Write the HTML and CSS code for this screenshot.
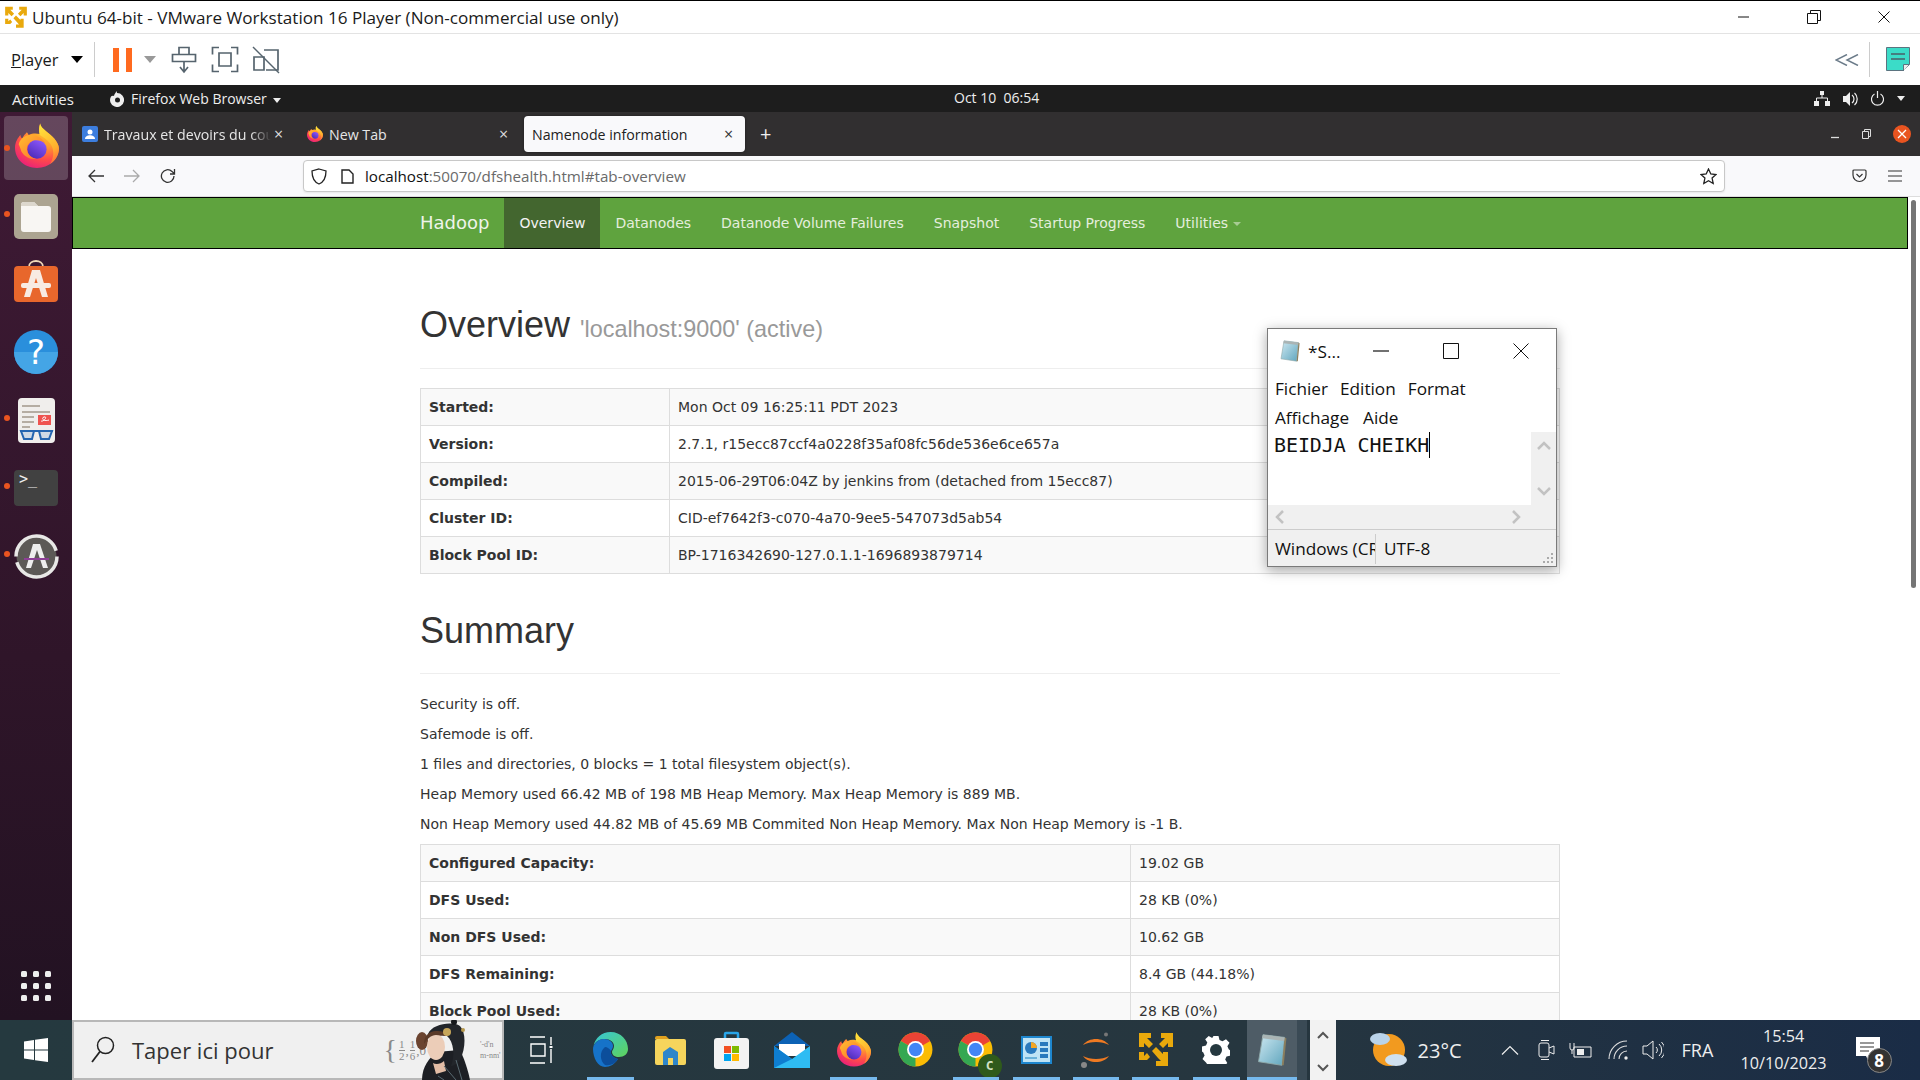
FILE: index.html
```html
<!DOCTYPE html>
<html lang="en">
<head>
<meta charset="utf-8">
<title>Ubuntu 64-bit - VMware Workstation 16 Player</title>
<link rel="stylesheet" href="styles.css">
</head>
<body>
<svg class="defs" width="0" height="0">
  <defs>
    <radialGradient id="ffbody" cx="0.72" cy="0.1" r="1.05">
      <stop offset="0" stop-color="#ffd028"/><stop offset="0.4" stop-color="#ff9a2e"/><stop offset="0.68" stop-color="#ff4a4a"/><stop offset="1" stop-color="#e31587"/>
    </radialGradient>
    <linearGradient id="ffflame" x1="0.4" y1="0" x2="0.7" y2="1"><stop offset="0" stop-color="#ffe03a"/><stop offset="0.65" stop-color="#ffae2e"/><stop offset="1" stop-color="#ff6a3a"/></linearGradient>
    <linearGradient id="ffball" x1="0.8" y1="0" x2="0.2" y2="1"><stop offset="0" stop-color="#9059ff"/><stop offset="1" stop-color="#4a2ab5"/></linearGradient>
    <linearGradient id="ffswoosh" x1="0" y1="0" x2="1" y2="1"><stop offset="0" stop-color="#ffc02e"/><stop offset="1" stop-color="#ff6a2e"/></linearGradient>
    <linearGradient id="notegrad" x1="0" y1="0" x2="1" y2="1"><stop offset="0" stop-color="#cfe9f2"/><stop offset="1" stop-color="#5fa5bd"/></linearGradient>
    <linearGradient id="edgegrad" x1="0" y1="0" x2="1" y2="1"><stop offset="0" stop-color="#36c5d8"/><stop offset="1" stop-color="#5fd35a"/></linearGradient>
    <symbol id="ff" viewBox="0 0 48 48">
      <path d="M27.500 0C29 6 37 9 43 16c4 5 5 9 5 11 -1 12-11 21-24 21C10 48 0 38 0 26c0-6 3-11 6-14 0 2 1 3 2 4 1-3 3-5 5-7 1 1 1 2 2 3 4-2 8-2 12-1-1-4-1-8 .5-12z" fill="url(#ffbody)"/>
      <path d="M27.500 0C29 6 37 9 43 16c4 5 5 9 5 11 0 7-4 13-10 17 4-6 5-14 2-20-3-6-10-10-13-12-1-4-1-8 .5-12z" fill="url(#ffflame)"/>
      <circle cx="24" cy="27.500" r="10.500" fill="url(#ffball)"/>
      <path d="M4 22c2-7 9-11 16-10 6 1 11 5 13 9-4-3-9-4-13-3-5 2-7 5-7 9 0 5 4 10 10 11-7 1-13-3-16-8-1-3-2-6-3-8z" fill="url(#ffswoosh)"/>
    </symbol>
    <symbol id="chrome" viewBox="0 0 48 48">
      <circle cx="24" cy="24" r="22" fill="#fbbc04"/>
      <path d="M24 24L4.900 13A22 22 0 0 1 43.100 13z" fill="#ea4335"/>
      <path d="M24 24L24 46A22 22 0 0 1 4.900 13z" fill="#34a853"/>
      <circle cx="24" cy="24" r="11" fill="#fff"/><circle cx="24" cy="24" r="8.600" fill="#4285f4"/>
    </symbol>
    <symbol id="vmlogo" viewBox="0 0 36 36">
      <path d="M1 1h12v5H9l6 6-4 4-5-5v4H1zM35 1H23v5h4l-6 6 4 4 5-5v4h5zM14 19l4-4 7 7v-2h5v14H18v-5h5l-1-1-2-2-6-7z" fill="#e9a90c"/>
      <path d="M1 20h5v4l3-3 3 4-3 3H1z" fill="#e9a90c"/>
    </symbol>
    <symbol id="notepad" viewBox="0 0 40 40">
      <path d="M10 3l24 3-3 31-26-4z" fill="url(#notegrad)" stroke="#8fa8a8"/>
      <path d="M31 37l3-31 2 1-3 30z" fill="#8b7f5e"/>
      <path d="M10 3l24 3-.5 4L9 7z" fill="#aab4b4"/>
    </symbol>
  </defs>
</svg>

<div class="desktop">
  <header class="titlebar">
    <svg class="tb-logo" width="24" height="23"><use href="#vmlogo"/></svg>
    <span class="tb-title">Ubuntu 64-bit - VMware Workstation 16 Player (Non-commercial use only)</span>
    <div class="wc">
      <svg width="12" height="12" viewBox="0 0 12 12"><path d="M0 6h11" stroke="#111" fill="none"/></svg>
      <svg width="14" height="14" viewBox="0 0 14 14"><path d="M.5 3.500h10v10H.5zM3.500 3V.5h10v10H11" stroke="#111" fill="none"/></svg>
      <svg width="12" height="12" viewBox="0 0 12 12"><path d="M.5.5l11 11M11.500.5l-11 11" stroke="#111" fill="none"/></svg>
    </div>
  </header>

  <div class="toolbar">
    <span class="tl-player"><u>P</u>layer</span>
    <span class="caret-b"></span>
    <span class="tl-sep"></span>
    <span class="pause"><i></i><i></i></span>
    <span class="caret-g"></span>
    <svg class="t-ic" width="26" height="28" viewBox="0 0 26 28"><path d="M8 1.500h10v7H8zM1.500 8.500h23v7H1.500zM13 15v10M9 21l4 5 4-5" fill="none" stroke="#56646e" stroke-width="1.700"/></svg>
    <svg class="t-ic" width="28" height="27" viewBox="0 0 28 27"><path d="M8 1.500H1.500v7M20 1.500h6.500v7M8 25.500H1.500v-7M20 25.500h6.500v-7" fill="none" stroke="#56646e" stroke-width="1.700"/><path d="M8 7h12v13H8z" fill="none" stroke="#56646e" stroke-width="1.700"/></svg>
    <svg class="t-ic" width="28" height="28" viewBox="0 0 28 28"><path d="M12 4h14v20H14M2 11h10v13H2z" fill="none" stroke="#56646e" stroke-width="1.700"/><path d="M1 1l26 26" stroke="#56646e" stroke-width="1.500"/></svg>
    <span class="grow"></span>
    <svg width="24" height="12" viewBox="0 0 24 12"><path d="M12 .5L1 6l11 5.500M23 .5L12 6l11 5.500" fill="none" stroke="#6c7c8a" stroke-width="1.500"/></svg>
    <span class="tl-sep tl-sep2"></span>
    <svg width="24" height="25" viewBox="0 0 24 25"><path d="M.5.5h23v17l-6 6H.5z" fill="#3bdcc8" stroke="#5b7480"/><path d="M17.500 24v-6.500H23" fill="#eee" stroke="#5b7480"/><path d="M5 7h14M5 12h14" stroke="#4a5f68" stroke-width="1.500"/></svg>
  </div>

  <div class="guest">
    <div class="gbar">
      <span class="g-act">Activities</span>
      <span class="g-app">
        <svg width="14" height="16" viewBox="0 0 14 16"><path d="M7 2a7 7 0 1 1-6 3.500C2 4.500 3 4.500 4 5c0-2 2-3 2.500-5 .3 1 .5 1.500.5 2z" fill="#eee"/><circle cx="7.500" cy="9" r="2.500" fill="#1d1d1d"/></svg>
        <span>Firefox Web Browser<span class="caret-w"></span></span>
      </span>
      <span class="g-clock">Oct 10&nbsp;&nbsp;06:54</span>
      <span class="g-tray">
        <svg width="16" height="15" viewBox="0 0 16 15"><path d="M6 0h4v4H6zM0 10h5v5H0zM11 10h5v5h-5z" fill="#eee"/><path d="M8 4v3M2.500 10V7h11v3" fill="none" stroke="#eee"/></svg>
        <svg width="15" height="14" viewBox="0 0 15 14"><path d="M0 4h3l4-4v14l-4-4H0z" fill="#eee"/><path d="M9 3a5 5 0 0 1 0 8M11.500 1a8 8 0 0 1 0 12" fill="none" stroke="#eee" stroke-width="1.200"/></svg>
        <svg width="13" height="15" viewBox="0 0 13 15"><path d="M6.500 0v7M3.500 3a6 6 0 1 0 6 0" fill="none" stroke="#eee" stroke-width="1.200"/></svg>
        <span class="caret-w caret-tray"></span>
      </span>
    </div>

    <div class="guest-main">
      <nav class="dock">
        <div class="dock-item active"><i class="run"></i><svg class="ff-dock" width="44" height="46"><use href="#ff"/></svg></div>
        <div class="dock-item"><i class="run"></i>
          <svg width="44" height="45" viewBox="0 0 44 45"><rect width="44" height="45" rx="5" fill="#aca491"/><path d="M7 11a3 3 0 0 1 3-3h10l4 4h10a3 3 0 0 1 3 3v20a3 3 0 0 1-3 3H10a3 3 0 0 1-3-3z" fill="#f8f6f3"/><path d="M7 11a3 3 0 0 1 3-3h10l4 4H7z" fill="#dcd7cd"/></svg>
        </div>
        <div class="dock-item">
          <svg class="store" width="44" height="42" viewBox="0 0 44 42"><path d="M15 7c0-8 14-8 14 0" fill="none" stroke="#f1d9b8" stroke-width="1.800"/><rect y="6" width="44" height="36" rx="4" fill="#e8672c"/><path d="M18 10h8l8 27h-6l-6-19-6 19h-6z" fill="#f8ebe2"/><rect x="7" y="23" width="30" height="5" rx="2" fill="#f8ebe2"/></svg>
        </div>
        <div class="dock-item">
          <svg width="44" height="44" viewBox="0 0 44 44"><circle cx="22" cy="22" r="22" fill="#2a8fdc"/><path d="M0 22h44a22 22 0 0 1-44 0z" fill="#44a5e6"/><text x="22" y="34" class="help-q">?</text></svg>
        </div>
        <div class="dock-item"><i class="run"></i>
          <svg width="37" height="45" viewBox="0 0 37 45"><rect width="37" height="45" rx="4" fill="#f0eeec"/><path d="M4 8h18M4 14h28M4 19h12M4 24h12M4 29h8" stroke="#b5ada3" stroke-width="1.800"/><rect x="20" y="17" width="13" height="10" fill="#ef5350"/><path d="M23 23c3 1 7-5 3-4-3 1-1 5 5 3" stroke="#fff" fill="none"/><path d="M2 33h33" stroke="#2565b0" stroke-width="2"/><path d="M3 33h13l-2 8H6zM21 33h13l-3 8h-8z" fill="#cfd9e5" stroke="#2565b0" stroke-width="2"/></svg>
        </div>
        <div class="dock-item"><i class="run"></i>
          <div class="term"><span>&gt;_</span></div>
        </div>
        <div class="dock-item"><i class="run"></i>
          <svg width="45" height="45" viewBox="0 0 45 45"><circle cx="22.500" cy="22.500" r="20" fill="#5c5956"/><circle cx="22.500" cy="22.500" r="20.500" fill="none" stroke="#e8e8e6" stroke-width="3.500" stroke-dasharray="58 6"/><path d="M19 10h7l8 24h-5l-6-18-6 18h-5z" fill="#eee"/><path d="M10 25h25" stroke="#8d3f96" stroke-width="2"/></svg>
        </div>
        <span class="grow"></span>
        <div class="apps"><i></i><i></i><i></i><i></i><i></i><i></i><i></i><i></i><i></i></div>
      </nav>

      <div class="firefox">
        <div class="ff-tabs">
          <div class="tab t1">
            <svg width="16" height="16" viewBox="0 0 16 16"><rect width="16" height="16" rx="2" fill="#3c7ddd"/><circle cx="8" cy="6" r="2.500" fill="#fff"/><path d="M3 13c0-5 10-5 10 0z" fill="#fff"/></svg>
            <span class="tab-t fade">Travaux et devoirs du cours</span>
            <span class="tab-x">×</span>
          </div>
          <div class="tab t2">
            <svg width="16" height="18"><use href="#ff"/></svg>
            <span class="tab-t">New Tab</span>
            <span class="tab-x">×</span>
          </div>
          <div class="tab t3">
            <span class="tab-t">Namenode information</span>
            <span class="tab-x">×</span>
          </div>
          <span class="tab-plus">+</span>
          <span class="grow"></span>
          <span class="ff-wc">
            <svg width="9" height="9" viewBox="0 0 9 9"><path d="M0 7.500h8" stroke="#ddd" stroke-width="1.300"/></svg>
            <svg width="9" height="10" viewBox="0 0 9 10"><path d="M.5 2.500h6v7h-6zM2.500 2V.5h6v7H7" fill="none" stroke="#ddd"/></svg>
            <span class="ff-close"><svg width="10" height="10" viewBox="0 0 10 10"><path d="M1 1l8 8M9 1l-8 8" stroke="#fff" stroke-width="1.300"/></svg></span>
          </span>
        </div>
        <div class="ff-nav">
          <svg class="ni" width="16" height="14" viewBox="0 0 16 14"><path d="M7 1L1 7l6 6M1 7h15" fill="none" stroke="#333" stroke-width="1.300"/></svg>
          <svg class="ni ni2" width="16" height="14" viewBox="0 0 16 14"><path d="M9 1l6 6-6 6M15 7H0" fill="none" stroke="#aaa" stroke-width="1.300"/></svg>
          <svg class="ni ni3" width="16" height="16" viewBox="0 0 16 16"><path d="M14 8a6.300 6.300 0 1 1-2-4.600L14.500 6M14.500 1v5H10" fill="none" stroke="#333" stroke-width="1.300"/></svg>
          <div class="urlbar">
            <svg width="16" height="17" viewBox="0 0 16 17"><path d="M8 1l7 2c0 7-2 11-7 13C3 14 1 10 1 3z" fill="none" stroke="#222" stroke-width="1.300"/></svg>
            <svg class="pg" width="13" height="15" viewBox="0 0 13 15"><path d="M1 1h7l4 4v9H1z" fill="none" stroke="#222" stroke-width="1.400"/></svg>
            <span class="url"><b>localhost</b>:50070/dfshealth.html#tab-overview</span>
            <span class="grow"></span>
            <svg class="star" width="17" height="17" viewBox="0 0 17 17"><path d="M8.500 1l2.300 5 5.200.6-3.900 3.500 1.100 5.400-4.700-2.700-4.700 2.700 1.100-5.400L1 6.600 6.200 6z" fill="none" stroke="#222" stroke-width="1.300"/></svg>
          </div>
          <svg class="pocket" width="15" height="14" viewBox="0 0 15 14"><path d="M2 1h11a1 1 0 0 1 1 1v4a6.500 6.500 0 0 1-13 0V2a1 1 0 0 1 1-1z" fill="none" stroke="#333" stroke-width="1.200"/><path d="M4.500 5l3 3 3-3" fill="none" stroke="#333" stroke-width="1.200"/></svg>
          <svg class="burger" width="14" height="12" viewBox="0 0 14 12"><path d="M0 1h14M0 6h14M0 11h14" stroke="#333" stroke-width="1.200"/></svg>
        </div>

        <div class="viewport">
          <div class="navbar">
            <div class="nav-in">
              <a class="brand">Hadoop</a>
              <a class="nav-a on">Overview</a>
              <a class="nav-a">Datanodes</a>
              <a class="nav-a">Datanode Volume Failures</a>
              <a class="nav-a">Snapshot</a>
              <a class="nav-a">Startup Progress</a>
              <a class="nav-a">Utilities<i class="nav-caret"></i></a>
            </div>
          </div>
          <main class="page">
            <div class="page-header"><h1>Overview <small>'localhost:9000' (active)</small></h1></div>
            <table class="tbl t-a">
              <tr><th>Started:</th><td>Mon Oct 09 16:25:11 PDT 2023</td></tr>
              <tr><th>Version:</th><td>2.7.1, r15ecc87ccf4a0228f35af08fc56de536e6ce657a</td></tr>
              <tr><th>Compiled:</th><td>2015-06-29T06:04Z by jenkins from (detached from 15ecc87)</td></tr>
              <tr><th>Cluster ID:</th><td>CID-ef7642f3-c070-4a70-9ee5-547073d5ab54</td></tr>
              <tr><th>Block Pool ID:</th><td>BP-1716342690-127.0.1.1-1696893879714</td></tr>
            </table>
            <div class="page-header"><h1>Summary</h1></div>
            <p>Security is off.</p>
            <p>Safemode is off.</p>
            <p>1 files and directories, 0 blocks = 1 total filesystem object(s).</p>
            <p>Heap Memory used 66.42 MB of 198 MB Heap Memory. Max Heap Memory is 889 MB.</p>
            <p>Non Heap Memory used 44.82 MB of 45.69 MB Commited Non Heap Memory. Max Non Heap Memory is -1 B.</p>
            <table class="tbl t-b">
              <tr><th>Configured Capacity:</th><td>19.02 GB</td></tr>
              <tr><th>DFS Used:</th><td>28 KB (0%)</td></tr>
              <tr><th>Non DFS Used:</th><td>10.62 GB</td></tr>
              <tr><th>DFS Remaining:</th><td>8.4 GB (44.18%)</td></tr>
              <tr><th>Block Pool Used:</th><td>28 KB (0%)</td></tr>
            </table>
          </main>
          <span class="scrollthumb"></span>
        </div>
      </div>
    </div>
  </div>

  <footer class="taskbar">
    <div class="start"><svg width="24" height="24" viewBox="0 0 24 24"><path d="M0 3.500l10-1.500v9.500H0zM11 1.800L24 0v11.500H11zM0 12.500h10V22L0 20.500zM11 12.500h13V24l-13-1.800z" fill="#fff"/></svg></div>
    <div class="search">
      <svg width="24" height="28" viewBox="0 0 24 28"><circle cx="14.500" cy="9.500" r="8" fill="none" stroke="#222" stroke-width="1.500"/><path d="M9 15.500L1 26" stroke="#222" stroke-width="1.800"/></svg>
      <span class="s-text">Taper ici pour</span>
      <span class="grow"></span>
      <span class="s-math"><span class="s-brace">{</span><span class="frac"><span>1</span><span>2</span></span>,<span class="frac"><span>1</span><span>6</span></span>,0</span>
      <svg class="ada" width="66" height="60" viewBox="0 0 66 60">
        <path d="M8 60c0-14 8-22 14-28l24-2c4 8 8 20 10 30z" fill="#1d1f24"/>
        <path d="M14 14c4-10 24-13 32-8 6 6 6 22 0 34-3 4-7 6-9 6 4-10 3-24-4-30-6-2-10 0-11 4z" fill="#23262b"/>
        <ellipse cx="8" cy="21" rx="6" ry="9" fill="#6b4430"/>
        <ellipse cx="22" cy="27" rx="9" ry="13" fill="#eccdb8"/>
        <path d="M22 11c-7 0-12 5-12 13 3-5 7-9 12-9 5 0 10 2 12 0-2-3-6-4-12-4z" fill="#5b3a28"/>
        <path d="M19 43c3 2 8 1 11-2l2 10-10 3z" fill="#e3bda6"/>
        <circle cx="33" cy="12" r="4" fill="#c7a65a"/><circle cx="49" cy="10" r="2" fill="#b6984c"/><circle cx="40" cy="2" r="3" fill="#17191d"/>
        <path d="M30 46l12 14M42 40l6 20M24 56l6 4" stroke="#596a72" stroke-width="1"/>
      </svg>
      <span class="s-form">'-d'n<br>m-nm'</span>
    </div>
    <div class="taskview"><svg width="24" height="28" viewBox="0 0 24 28"><path d="M0 1h15M0 27h15M1 8h14v12H1zM21 1v8M21 13v14" fill="none" stroke="#fff" stroke-width="1.400"/><rect x="19.500" y="10" width="3" height="2" fill="#fff"/></svg></div>
    <div class="apps-tb">
      <div class="tb-i on">
        <svg width="37" height="37" viewBox="0 0 37 37"><path d="M18.500 1C29 1 36 9 36 18c0 5-4 8-9 8-4 0-7-2-7-5 0-2 2-3 2-6 0-4-4-7-9-7C7 8 3 11 1.500 15 3 7 10 1 18.500 1z" fill="url(#edgegrad)"/><path d="M1 18c0-5 5-10 11-10 5 0 9 3 9 7 0 2-1 3-2 5-1 3 2 7 7 8-3 5-8 8-13 8C6 36 1 27 1 18z" fill="#1673c9"/><path d="M13 16c2 0 5 2 6 4-1 3 2 7 7 8-3 5-8 7-13 6-5-4-6-13 0-18z" fill="#0c4e9b"/></svg>
      </div>
      <div class="tb-i">
        <svg width="33" height="32" viewBox="0 0 33 32"><path d="M1 4a2 2 0 0 1 2-2h9l3 3H1z" fill="#e0a11f"/><rect x="1" y="5" width="31" height="26" rx="2" fill="#f6d55c"/><path d="M9 18l7-5 8 5v13h-5v-7h-5v7H9z" fill="#2f86c9"/></svg>
      </div>
      <div class="tb-i">
        <svg width="35" height="38" viewBox="0 0 35 38"><path d="M11 8V3a1 1 0 0 1 1-1h11a1 1 0 0 1 1 1v5" fill="none" stroke="#2aa5e8" stroke-width="2.500"/><rect y="7" width="35" height="31" rx="3" fill="#f3f3f3"/><rect x="10" y="15" width="7" height="7" fill="#f25022"/><rect x="18" y="15" width="7" height="7" fill="#7fba00"/><rect x="10" y="23" width="7" height="7" fill="#00a4ef"/><rect x="18" y="23" width="7" height="7" fill="#ffb900"/></svg>
      </div>
      <div class="tb-i">
        <svg width="36" height="36" viewBox="0 0 36 36"><path d="M18 0L0 14h36z" fill="#0c62b5"/><path d="M5 12h26v12H5z" fill="#fff"/><path d="M0 14l18 13 18-13v22H0z" fill="#2fbcf3"/><path d="M0 14l18 13L0 36z" fill="#0e7ed1"/></svg>
      </div>
      <div class="tb-i on"><svg width="34" height="37"><use href="#ff"/></svg></div>
      <div class="tb-i"><svg width="37" height="37"><use href="#chrome"/></svg></div>
      <div class="tb-i on chromec">
        <svg width="37" height="37"><use href="#chrome"/></svg>
        <span class="c-badge">C</span>
      </div>
      <div class="tb-i on">
        <svg width="31" height="28" viewBox="0 0 31 28"><rect width="31" height="28" fill="#1e87cf"/><rect x="2" y="2" width="27" height="24" fill="#bfe3f5"/><circle cx="10" cy="12" r="6" fill="#2a79bd"/><path d="M10 12V6a6 6 0 0 1 6 6z" fill="#f5a623"/><path d="M19 6h8v4h-8zM19 12h8v4h-8zM19 18h8v4h-8z" fill="#2a79bd"/><path d="M4 22h12" stroke="#6bb2da" stroke-width="2"/></svg>
      </div>
      <div class="tb-i on">
        <svg width="32" height="36" viewBox="0 0 32 36"><path d="M3 13c6-8 20-8 26 0-7-4-19-4-26 0zM3 24c6 8 20 8 26 0-7 4-19 4-26 0z" fill="#ef7a22"/><circle cx="26" cy="2.500" r="2" fill="#777"/><circle cx="4" cy="33" r="3" fill="#888"/></svg>
      </div>
      <div class="tb-i on"><svg width="36" height="38"><use href="#vmlogo"/></svg></div>
      <div class="tb-i on">
        <svg width="28" height="28" viewBox="0 0 28 28"><path d="M11.500 0h5l1 4 3 1.300 3.500-2.100 3.500 3.500-2.100 3.500 1.300 3 1.800 1.300v5l-4 1-1.300 3 2.100 3.500-3.500 3.500-3.500-2.100-3 1.300-1 4h-5l-1-4-3-1.300L4 26.400.5 23l2.100-3.500-1.300-3-1.300-1v-5l4-1 1.300-3L3.200 3.200 6.700 0l3.500 2.100 1.300-2.100z" fill="#fff"/><circle cx="14" cy="14" r="6" fill="#25383f"/></svg>
      </div>
      <div class="tb-i on current"><svg width="36" height="38"><use href="#notepad"/></svg></div>
    </div>
    <div class="tb-edge"></div>
    <div class="tb-scroll">
      <svg width="12" height="8" viewBox="0 0 12 8"><path d="M1 7l5-5 5 5" fill="none" stroke="#555" stroke-width="2"/></svg>
      <svg width="12" height="8" viewBox="0 0 12 8"><path d="M1 1l5 5 5-5" fill="none" stroke="#555" stroke-width="2"/></svg>
    </div>
    <div class="tray">
      <svg class="weather" width="38" height="40" viewBox="0 0 38 40"><circle cx="19" cy="20" r="16" fill="#f29a1f"/><ellipse cx="10" cy="9" rx="10" ry="6" fill="#b9d3ea"/><ellipse cx="26" cy="30" rx="11" ry="6" fill="#cfe0ef"/></svg>
      <span class="temp">23°C</span>
      <svg class="tr chev" width="18" height="10" viewBox="0 0 18 10"><path d="M1 9.500l8-8 8 8" fill="none" stroke="#eee" stroke-width="1.200"/></svg>
      <svg class="tr tr-v" width="17" height="22" viewBox="0 0 17 22"><rect x="1" y="4" width="10" height="14" rx="2" fill="none" stroke="#eee"/><path d="M11 9l5-2v8l-5-2M3 1.500h8M3 20.500h8" fill="none" stroke="#eee"/></svg>
      <svg class="tr tr-b" width="23" height="16" viewBox="0 0 23 16"><path d="M5 5h17v10H5zM1 1v5a2 2 0 0 0 4 0V1M3 8v4" fill="none" stroke="#eee"/><rect x="8" y="7" width="7" height="6" fill="#eee"/></svg>
      <svg class="tr tr-w" width="22" height="20" viewBox="0 0 22 20"><path d="M1 19A18 18 0 0 1 19 1M6 19A13 13 0 0 1 19 6M11 19a8 8 0 0 1 8-8" fill="none" stroke="#ddd" stroke-width="1.100"/><circle cx="18" cy="18" r="1.700" fill="#eee"/></svg>
      <svg class="tr tr-s" width="22" height="20" viewBox="0 0 22 20"><path d="M1 6h4l6-5v18l-6-5H1zM14 7a4 4 0 0 1 0 6M17 4a8 8 0 0 1 0 12M19.500 2a11 11 0 0 1 0 16" fill="none" stroke="#eee"/></svg>
      <span class="lang">FRA</span>
      <span class="clock"><span>15:54</span><span>10/10/2023</span></span>
      <span class="notif">
        <svg width="24" height="26" viewBox="0 0 24 26"><path d="M0 0h24v19h-6l-5 6-3-6H0z" fill="#fff"/><path d="M4 6h14M4 10h14M4 14h9" stroke="#333" stroke-width="1.200"/></svg>
        <span class="nbadge">8</span>
      </span>
    </div>
  </footer>

  <section class="notepad">
    <div class="np-title">
      <svg width="24" height="24"><use href="#notepad"/></svg>
      <span class="np-name">*S...</span>
      <span class="grow"></span>
      <svg class="np-min" width="16" height="2" viewBox="0 0 16 2"><path d="M0 1h16" stroke="#111" stroke-width="1.200"/></svg>
      <svg class="np-max" width="16" height="16" viewBox="0 0 16 16"><path d="M.5.5h15v15H.5z" fill="none" stroke="#111"/></svg>
      <svg class="np-cls" width="16" height="16" viewBox="0 0 16 16"><path d="M.5.5l15 15M15.500.5l-15 15" stroke="#111"/></svg>
    </div>
    <div class="np-menu"><span>Fichier</span><span>Edition</span><span>Format</span><span>Affichage</span><span>Aide</span></div>
    <div class="np-edit">
      <div class="np-text">BEIDJA CHEIKH<i class="np-cur"></i></div>
      <div class="np-vs">
        <svg width="14" height="9" viewBox="0 0 14 9"><path d="M1 8l6-6 6 6" fill="none" stroke="#c2c2c2" stroke-width="2.500"/></svg>
        <svg width="14" height="9" viewBox="0 0 14 9"><path d="M1 1l6 6 6-6" fill="none" stroke="#c2c2c2" stroke-width="2.500"/></svg>
      </div>
    </div>
    <div class="np-hs">
      <svg width="9" height="14" viewBox="0 0 9 14"><path d="M8 1L2 7l6 6" fill="none" stroke="#c2c2c2" stroke-width="2.500"/></svg>
      <svg width="9" height="14" viewBox="0 0 9 14"><path d="M1 1l6 6-6 6" fill="none" stroke="#c2c2c2" stroke-width="2.500"/></svg>
    </div>
    <div class="np-status">
      <span class="np-enc">Windows (CRLF)</span>
      <span class="np-utf">UTF-8</span>
      <svg class="np-grip" width="12" height="12" viewBox="0 0 12 12"><path d="M9 1h2v2H9zM5 5h2v2H5zM9 5h2v2H9zM1 9h2v2H1zM5 9h2v2H5zM9 9h2v2H9z" fill="#aaa"/></svg>
    </div>
  </section>
</div>
</body>
</html>
```
FILE: styles.css
```css
* { box-sizing: border-box; }
html, body { margin: 0; padding: 0; width: 1920px; height: 1080px; overflow: hidden; background: #fff; }
body { font-family: "Open Sans", sans-serif; color: #111; }
.defs { position: absolute; }
.grow { flex: 1 1 auto; }
svg { display: block; flex: none; }

.desktop { position: relative; width: 1920px; height: 1080px; display: flex; flex-direction: column; }

/* VMware title bar */
.titlebar { height: 34px; border-top: 1px solid #000; border-bottom: 1px solid #e3e3e3; display: flex; align-items: center; padding-left: 4px; background: #fff; }
.tb-logo { margin-right: 4px; }
.tb-title { font-size: 17.1px; color: #1a1a1a; white-space: nowrap; }
.wc { margin-left: auto; display: flex; align-items: center; gap: 57px; padding-right: 30px; }

/* VMware toolbar */
.toolbar { height: 51px; display: flex; align-items: center; padding: 0 10px 0 11px; background: #fff; }
.tl-player { font-size: 16.5px; color: #1a1a1a; }
.caret-b { width: 0; height: 0; border: 6px solid transparent; border-top: 7px solid #000; border-bottom: 0; margin-left: 12px; }
.tl-sep { width: 1px; height: 35px; background: #ccc; margin-left: 11px; }
.tl-sep2 { margin: 0 16px 0 10px; }
.pause { display: flex; gap: 7px; margin-left: 18px; }
.pause i { width: 6px; height: 24px; background: #ff6a1f; }
.caret-g { width: 0; height: 0; border: 6px solid transparent; border-top: 7px solid #999; border-bottom: 0; margin: 0 15px 0 12px; }
.t-ic { margin-right: 14px; }
.t-ic:nth-of-type(2) { margin-right: 13px; }

/* guest */
.guest { flex: 1 1 0; min-height: 0; display: flex; flex-direction: column; }
.gbar { height: 27px; background: #1d1d1d; color: #eee; display: flex; align-items: center; font-size: 14px; padding-left: 12px; position: relative; }
.g-act { width: 98px; font-size: 15px; }
.g-app { display: flex; align-items: center; gap: 7px; }
.caret-w { display: inline-block; width: 0; height: 0; border: 4.500px solid transparent; border-top: 5px solid #eee; border-bottom: 0; margin-left: 6px; vertical-align: middle; }
.g-clock { position: absolute; left: 954px; top: 3px; white-space: nowrap; }
.g-tray { margin-left: auto; display: flex; align-items: center; gap: 13px; padding-right: 15px; }
.caret-tray { margin-left: 0; }

.guest-main { flex: 1 1 0; min-height: 0; display: flex; }
.dock { width: 72px; background: linear-gradient(180deg, #3f1a35 0%, #2f1529 60%, #221222 100%); display: flex; flex-direction: column; align-items: center; padding: 4px 0 19px; }
.dock-item { position: relative; width: 64px; height: 68px; display: flex; align-items: center; justify-content: center; flex: none; }
.dock-item.active { height: 64px; background: rgba(255,255,255,.2); border-radius: 4px; margin-bottom: 2px; }
.ff-dock { margin-bottom: 4px; margin-left: 2px; }
.store { margin-bottom: 6px; }
.run { position: absolute; left: 0; top: 29px; width: 6px; height: 6px; border-radius: 50%; background: #e95420; }
.term { width: 44px; height: 36px; border-radius: 4px; background: #414141; color: #eee; font: 15px/1 "DejaVu Sans Mono", monospace; padding: 2px 5px; }
.help-q { font: 400 34px "DejaVu Sans", sans-serif; fill: #fff; text-anchor: middle; }
.apps { width: 30px; display: grid; grid-template-columns: repeat(3, 6px); justify-content: space-between; gap: 6px 6px; }
.apps i { width: 6px; height: 6px; border-radius: 1.500px; background: #eee; }

.firefox { flex: 1 1 0; min-width: 0; display: flex; flex-direction: column; }
.ff-tabs { height: 44px; background: #312f30; display: flex; align-items: center; color: #e6e6e6; font-size: 14.2px; }
.tab { height: 36px; display: flex; align-items: center; border-radius: 4px; flex: none; }
.tab-t { white-space: nowrap; overflow: hidden; }
.tab-x { font-size: 16px; line-height: 1; color: #ddd; }
.t1 { width: 222px; padding-left: 10px; }
.t1 .tab-t { width: 167px; margin-left: 6px; }
.t1 .fade { -webkit-mask-image: linear-gradient(90deg, #000 88%, transparent); mask-image: linear-gradient(90deg, #000 88%, transparent); }
.t1 .tab-x { margin-left: 3px; }
.t2 { width: 230px; padding-left: 13px; }
.t2 .tab-t { width: 170px; margin-left: 6px; }
.t3 { width: 221px; background: #f9f9fb; color: #222; padding-left: 8px; box-shadow: 0 0 3px rgba(0,0,0,.4); }
.t3 .tab-t { width: 192px; }
.t3 .tab-x { color: #333; }
.tab-plus { margin-left: 15px; font-size: 20px; line-height: 1; color: #eee; }
.ff-wc { display: flex; align-items: center; padding-right: 9px; gap: 22px; }
.ff-close { width: 18px; height: 18px; border-radius: 50%; background: #e95420; display: flex; align-items: center; justify-content: center; }

.ff-nav { height: 41px; background: #f9f9fb; border-bottom: 1px solid #ddd; display: flex; align-items: center; padding-left: 16px; }
.ni2 { margin-left: 20px; }
.ni3 { margin-left: 20px; }
.urlbar { width: 1422px; height: 32px; margin-left: 127px; background: #fff; border: 1px solid #c8c8c8; border-radius: 4px; display: flex; align-items: center; padding-left: 7px; font-size: 15.200px; color: #6a6a6a; box-shadow: 0 1px 2px rgba(0,0,0,.08); }
.pg { margin-left: 14px; }
.url { margin-left: 11px; white-space: nowrap; }
.url b { font-weight: 400; color: #111; }
.star { margin-right: 7px; }
.pocket { margin-left: 127px; }
.burger { margin-left: 21px; }

.viewport { position: relative; flex: 1 1 0; min-height: 0; overflow: hidden; background: #fff; font: 14px/20px "DejaVu Sans", sans-serif; color: #333; }
.navbar { width: 1836px; height: 52px; background: #5fa33e; border: 1px solid #000; }
.nav-in { display: flex; height: 50px; width: 1170px; margin-left: 332px; }
.brand { padding: 15px; font-size: 18px; color: #eef4ea; }
.nav-a { padding: 15px; color: #e4eedd; white-space: nowrap; }
.nav-a.on { background: #43662f; color: #f3f3f3; }
.nav-caret { display: inline-block; width: 0; height: 0; border: 4px solid transparent; border-top: 4px solid #a8cc94; border-bottom: 0; margin-left: 5px; vertical-align: middle; }

.page { width: 1140px; margin-left: 348px; padding-top: 20px; }
.page-header { margin: 36px 0 20px; padding-bottom: 9px; border-bottom: 1px solid #eee; }
h1 { margin: 0 0 14px; font: 500 36px/1.1 "Liberation Sans", sans-serif; color: #333; }
h1 small { font-size: 65%; font-weight: 400; line-height: 1; color: #999; }
p { margin: 0 0 10px; }
.tbl { width: 100%; border-collapse: collapse; margin-bottom: 20px; background: #fff; }
.tbl th, .tbl td { padding: 8px; border: 1px solid #ddd; text-align: left; line-height: 20px; }
.tbl tr:nth-child(odd) { background: #f9f9f9; }
.t-a { margin-top: -1px; margin-bottom: 37px; }
.t-a th { width: 249px; }
.t-b th { width: 710px; }
.scrollthumb { position: absolute; right: 4px; top: 3px; width: 5px; height: 388px; border-radius: 3px; background: #757575; }

/* Windows taskbar */
.taskbar { height: 60px; flex: none; display: flex; background: linear-gradient(90deg, #25393f 0%, #26363f 65%, #1a2c46 100%); color: #eee; }
.start { width: 72px; display: flex; align-items: center; justify-content: center; }
.search { width: 432px; height: 60px; background: #f0f0f0; border: 2px solid #b8b8b8; display: flex; align-items: center; padding-left: 17px; color: #333; }
.s-text { margin-left: 17px; font-size: 22px; }
.s-math { display: flex; align-items: center; font: 13px/1 "Liberation Serif", serif; color: #8a8a8a; white-space: nowrap; margin-right: -12px; }
.s-brace { font-size: 28px; font-weight: 400; margin-right: 1px; }
.frac { display: inline-flex; flex-direction: column; align-items: center; font-size: 11px; line-height: 11px; margin: 0 1px; }
.frac span:first-child { border-bottom: 1px solid #8a8a8a; }
.ada { margin-top: -2px; margin-bottom: -2px; }
.s-form { font: 8px/11px "Liberation Serif", serif; color: #8a8a8a; width: 22px; white-space: nowrap; }
.taskview { width: 76px; display: flex; align-items: center; justify-content: center; }
.apps-tb { display: flex; }
.tb-i { position: relative; width: 60.600px; height: 60px; display: flex; align-items: center; justify-content: center; border-bottom: 3px solid transparent; padding-top: 2px; }
.tb-i.on::after { content: ""; position: absolute; left: 7px; right: 7px; bottom: -3px; height: 3px; background: #76b9ed; }
.tb-i:nth-child(5), .tb-i:nth-child(6) { margin-left: 1px; }
.tb-i:nth-child(9), .tb-i:nth-child(10) { margin-left: -1px; }
.tb-i.current { width: 50px; margin-left: 0; background: #4e5c66; }
.tb-i.current::after { left: 0; right: 0; }
.chromec .c-badge { position: absolute; left: 32px; top: 34px; width: 24px; height: 24px; border-radius: 50%; background: #2f5a1c; color: #cfe0c4; font: 700 13px/24px "DejaVu Sans Mono", monospace; text-align: center; }
.tb-edge { width: 13px; background: #3a4a55; border-right: 3px solid #26363f; }
.tb-scroll { width: 26px; background: #f2f2f2; display: flex; flex-direction: column; align-items: center; justify-content: space-between; padding: 11px 0 8px; flex: none; }
.tray { flex: 1 1 0; display: flex; align-items: center; padding-left: 34px; }
.temp { font-size: 20px; margin-left: 10px; width: 83px; }
.chev { margin-right: 19px; }
.tr-v { margin-right: 14px; }
.tr-b { margin-right: 16px; }
.tr-w { margin-right: 12px; }
.tr-s { margin-right: 18px; }
.lang { font-size: 18px; width: 36px; }
.clock { width: 132px; display: flex; flex-direction: column; align-items: center; font-size: 16.200px; line-height: 27px; }
.notif { position: relative; margin-left: 6px; }
.nbadge { position: absolute; left: 11px; top: 11px; width: 25px; height: 25px; border-radius: 50%; background: #333; border: 1px solid #888; color: #fff; font: 700 17px/23px "Open Sans", sans-serif; text-align: center; }

/* Notepad window */
.notepad { position: absolute; left: 1267px; top: 328px; width: 290px; height: 239px; background: #fff; border: 1px solid #7a7a7a; box-shadow: 0 3px 12px rgba(0,0,0,.35); display: flex; flex-direction: column; font-size: 17.200px; color: #111; }
.np-title { height: 44px; display: flex; align-items: center; padding: 0 27px 0 10px; }
.np-name { margin-left: 6px; }
.np-max { margin: 0 54px; }
.np-menu { height: 59px; display: flex; flex-wrap: wrap; gap: 0 12px; padding: 1px 7px 0; line-height: 29px; align-content: flex-start; }
.np-menu span:nth-child(3) { margin-right: 50px; }
.np-menu span:nth-child(4) { margin-right: 2px; }
.np-edit { height: 73px; display: flex; background: #f0f0f0; }
.np-text { flex: 1; background: #fff; font: 20px/26px "DejaVu Sans Mono", monospace; padding: 0 6px; letter-spacing: -.1px; white-space: nowrap; }
.np-cur { display: inline-block; width: 1px; height: 26px; background: #000; vertical-align: top; }
.np-vs { width: 25px; display: flex; flex-direction: column; align-items: center; justify-content: space-between; padding: 9px 0 9px; }
.np-hs { height: 25px; background: #f0f0f0; border-bottom: 1px solid #ccc; display: flex; align-items: center; justify-content: space-between; padding: 0 35px 0 7px; }
.np-status { flex: 1; background: #f0f0f0; display: flex; align-items: center; position: relative; padding-top: 1px; }
.np-enc { width: 108px; padding-left: 7px; border-right: 1px solid #ccc; white-space: nowrap; overflow: hidden; line-height: 30px; }
.np-utf { margin-left: 8px; }
.np-grip { position: absolute; right: 2px; bottom: 2px; }
```
